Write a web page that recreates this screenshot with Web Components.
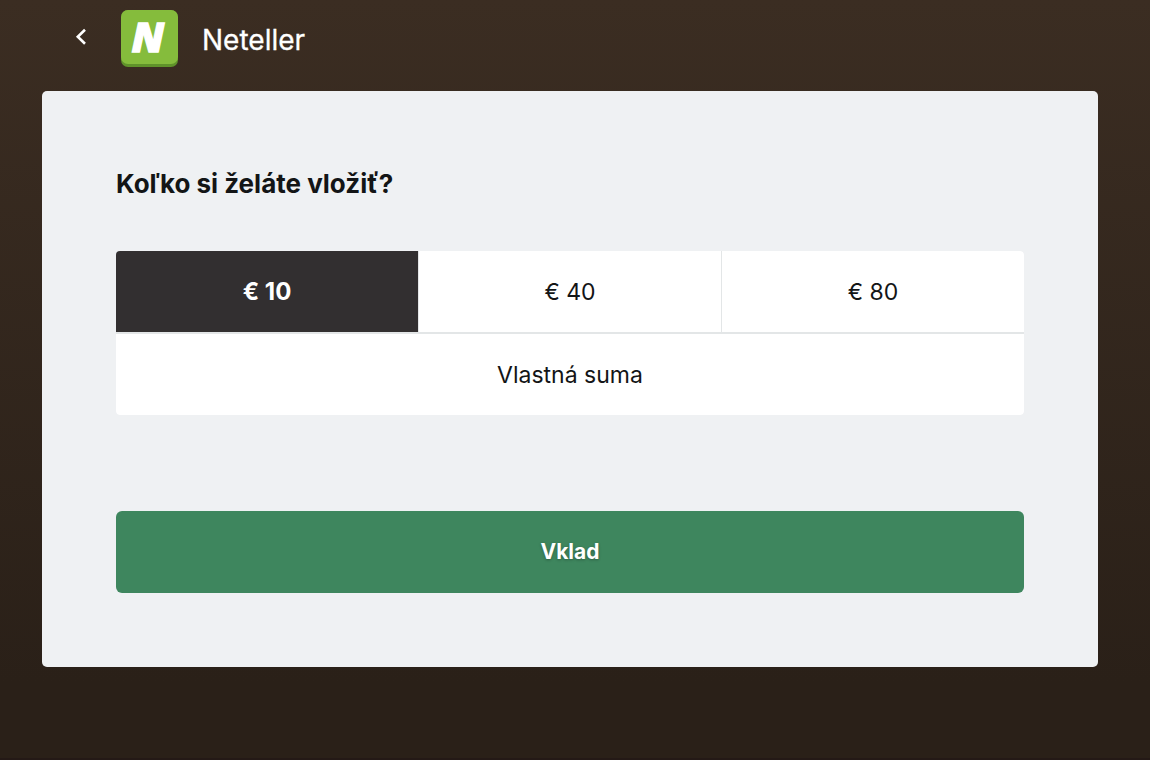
<!DOCTYPE html>
<html lang="sk">
<head>
<meta charset="utf-8">
<meta name="viewport" content="width=device-width, initial-scale=1">
<title>Neteller</title>
<style>
html { background: #2a1f17; }
body { margin: 0; font-family: Inter, "Liberation Sans", sans-serif; color: #131516; }
</style>
</head>
<body>
<deposit-page>
  <method-header slot="header" name="Neteller"></method-header>
  <deposit-card>
    <span slot="title">Koľko si želáte vložiť?</span>
    <amount-picker></amount-picker>
    <submit-button slot="action">Vklad</submit-button>
  </deposit-card>
</deposit-page>
<script>
const define = (name, html, setup) => customElements.define(name, class extends HTMLElement {
  constructor() {
    super();
    const t = document.createElement('template');
    t.innerHTML = html;
    this.attachShadow({ mode: 'open' }).append(t.content.cloneNode(true));
  }
  connectedCallback() { if (setup) setup(this); }
});

define('deposit-page', `
<style>
:host { display: block; box-sizing: border-box; min-height: 100vh; padding: 0 52px 40px 42px;
  background: linear-gradient(#3b2d22, #2a2018 90%); border-bottom: 2px solid #241916; }
</style>
<slot name="header"></slot>
<main><slot></slot></main>`);

define('method-header', `
<style>
:host { display: block; color: #fff; }
header { display: flex; align-items: center; height: 91px; box-sizing: border-box; padding: 0 27px 14px; }
button { width: 24px; height: 32px; margin: 0 28px 4px 0; padding: 0; border: 0; background: none; color: inherit; cursor: pointer; display: grid; place-items: center; }
.logo { display: block; margin-right: 24px; overflow: visible; }
h1 { margin: 0; padding-top: 2px; font-size: 28px; line-height: 36px; font-weight: 400; -webkit-text-stroke: 0.3px currentColor; }
</style>
<header>
  <button type="button" aria-label="Späť">
    <svg width="24" height="24" viewBox="0 0 24 24" fill="none" stroke="currentColor" stroke-width="2.6"><path d="M16 4.8 8.8 11.8 16 18.8"/></svg>
  </button>
  <svg class="logo" width="57" height="57" viewBox="0 0 57 57" aria-hidden="true">
    <rect width="57" height="57" rx="7" fill="#5f922a"/>
    <rect width="57" height="54" rx="7" fill="#85bc3c"/>
    <text x="27" y="42" text-anchor="middle" font-family="Open Sans" font-weight="800" font-style="italic" font-size="41" fill="#fff" stroke="#fff" stroke-width="1.4">N</text>
  </svg>
  <h1></h1>
</header>`, el => { el.shadowRoot.querySelector('h1').textContent = el.getAttribute('name'); });

define('deposit-card', `
<style>
:host { display: block; padding: 74px; border-radius: 5px; background: #eff1f3; }
h2 { margin: 0 0 48px; font-size: 26px; line-height: 38px; font-weight: 700; }
.action { margin-top: 96px; }
</style>
<section>
  <h2><slot name="title"></slot></h2>
  <slot></slot>
  <div class="action"><slot name="action"></slot></div>
</section>`);

define('amount-picker', `
<style>
:host { display: block; }
fieldset { display: grid; grid-template-columns: repeat(3, 1fr); gap: 2px 1px; min-width: 0; margin: 0; padding: 0; border: 0; border-radius: 4px; overflow: hidden; background: #e3e6e7; }
label { position: relative; display: grid; place-items: center; height: 81px; background: #fff; font-size: 23px; line-height: 32px; cursor: pointer; }
.custom { grid-column: 1 / -1; }
input { position: absolute; inset: 0; margin: 0; opacity: 0; cursor: pointer; }
label:has(:checked) { background: #322f30; color: #fff; font-size: 24px; font-weight: 700; }
label:has(:focus-visible) { outline: 2px solid #3e865e; outline-offset: -2px; }
</style>
<fieldset aria-label="Suma vkladu">
  <label><input type="radio" name="amount" value="10" checked><span>€ 10</span></label>
  <label><input type="radio" name="amount" value="40"><span>€ 40</span></label>
  <label><input type="radio" name="amount" value="80"><span>€ 80</span></label>
  <label class="custom"><input type="radio" name="amount" value="custom"><span>Vlastná suma</span></label>
</fieldset>`);

define('submit-button', `
<style>
:host { display: block; }
button { display: block; width: 100%; height: 82px; padding: 0; border: 0; border-radius: 6px; background: #3e865e; color: #fff; font: inherit; font-size: 21px; line-height: 28px; font-weight: 700; text-shadow: 0 1px 3px rgba(0,0,0,.3); cursor: pointer; }
</style>
<button type="button"><slot></slot></button>`);
</script>
</body>
</html>
